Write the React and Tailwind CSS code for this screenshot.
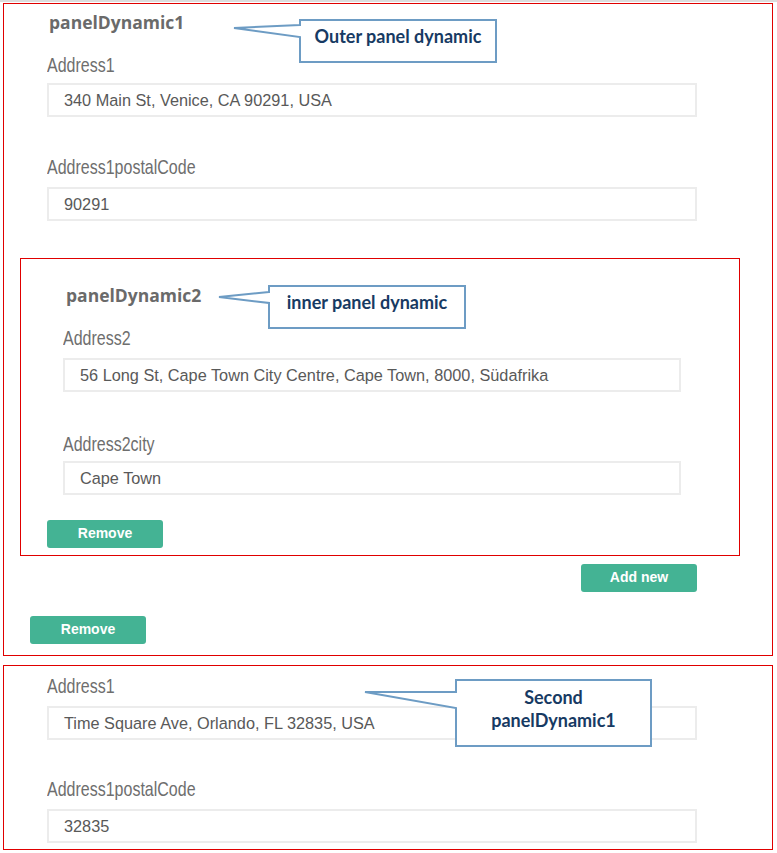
import React from 'react';

const Label = ({ children, className }) => (
    <div className={`text-[16px] leading-[22px] text-[#6e6e6e] font-['Liberation_Sans',sans-serif] scale-y-[1.22] origin-[0_16.5px] ${className}`}>{children}</div>
);

const Input = ({ value, className }) => (
    <div className={`h-[34px] flex items-center pl-[15px] border-2 border-[#ececec] bg-white text-[16.3px] text-[#595959] font-['Liberation_Sans',sans-serif] ${className}`}>
        {value}
    </div>
);

const Title = ({ children, className }) => (
    <div className={`pl-[45px] text-[17.5px] leading-6 font-bold text-[#6a6a6a] font-['Open_Sans',sans-serif] ${className}`}>{children}</div>
);

const Button = ({ children, className }) => (
    <button className={`h-7 w-[116px] rounded-[3px] bg-[#44b394] pb-[2px] text-[14px] font-bold text-white font-['Liberation_Sans',sans-serif] ${className}`}>
        {children}
    </button>
);

// callout shapes: box + pointer to the tip
const callouts = [
    { d: 'M300 25 L234 28 L300 37 V62 H496 V20 H300 Z' },
    { d: 'M269 292 L219 297 L269 303 V328 H465 V286 H269 Z' },
    { d: 'M456 692 L365 692 L456 708 V746 H651 V680 H456 Z' },
];

export default function App() {
    return (
        <div className="relative w-[777px] h-[853px] bg-white overflow-hidden">
            <div className="h-[2px] bg-[#dcdcdc]" />

            {/* outer panelDynamic1 */}
            <div className="mt-px ml-[3px] w-[770px] border border-[#e00000] pb-[11px]">
                <Title className="pt-[6px]">panelDynamic1</Title>
                <Label className="mt-[22px] ml-[43px]">Address1</Label>
                <Input className="mt-[5px] ml-[43px] w-[650px]" value="340 Main St, Venice, CA 90291, USA" />
                <Label className="mt-[41px] ml-[43px]">Address1postalCode</Label>
                <Input className="mt-[7px] ml-[43px] w-[650px]" value="90291" />

                {/* inner panelDynamic2 */}
                <div className="mt-[37px] ml-4 w-[720px] border border-[#e00000] pb-[7px]">
                    <Title className="pt-6">panelDynamic2</Title>
                    <Label className="mt-[22px] ml-[42px]">Address2</Label>
                    <Input className="mt-[7px] ml-[42px] w-[618px]" value="56 Long St, Cape Town City Centre, Cape Town, 8000, Südafrika" />
                    <Label className="mt-[43px] ml-[42px]">Address2city</Label>
                    <Input className="mt-[4px] ml-[42px] w-[618px]" value="Cape Town" />
                    <Button className="mt-[25px] ml-[26px] block">Remove</Button>
                </div>

                <div className="mt-2 flex justify-end pr-[75px]">
                    <Button>Add new</Button>
                </div>
                <Button className="mt-6 ml-[26px] block">Remove</Button>
            </div>

            {/* second panelDynamic1 */}
            <div className="mt-[9px] ml-[3px] w-[770px] border border-[#e00000] pt-[11px] pb-[6px]">
                <Label className="ml-[43px]">Address1</Label>
                <Input className="mt-[7px] ml-[43px] w-[650px]" value="Time Square Ave, Orlando, FL 32835, USA" />
                <Label className="mt-[40px] ml-[43px]">Address1postalCode</Label>
                <Input className="mt-[7px] ml-[43px] w-[650px]" value="32835" />
            </div>

            {/* annotations */}
            <svg className="absolute left-0 top-0 pointer-events-none" width="777" height="853">
                {callouts.map((c, i) => (
                    <path key={i} d={c.d} fill="#fff" stroke="#6d9cc4" strokeWidth="2" strokeLinejoin="miter" />
                ))}
            </svg>
            <div className="absolute left-[300px] top-[26px] w-[196px] text-center text-[18px] leading-5 font-bold text-[#173a63] font-['Lato',sans-serif]">
                Outer panel dynamic
            </div>
            <div className="absolute left-[269px] top-[292px] w-[196px] text-center text-[18px] leading-5 font-bold text-[#173a63] font-['Lato',sans-serif]">
                inner panel dynamic
            </div>
            <div className="absolute left-[456px] top-[686px] w-[195px] text-center text-[18px] leading-[23px] font-bold text-[#173a63] font-['Lato',sans-serif]">
                Second<br />panelDynamic1
            </div>
        </div>
    );
}
